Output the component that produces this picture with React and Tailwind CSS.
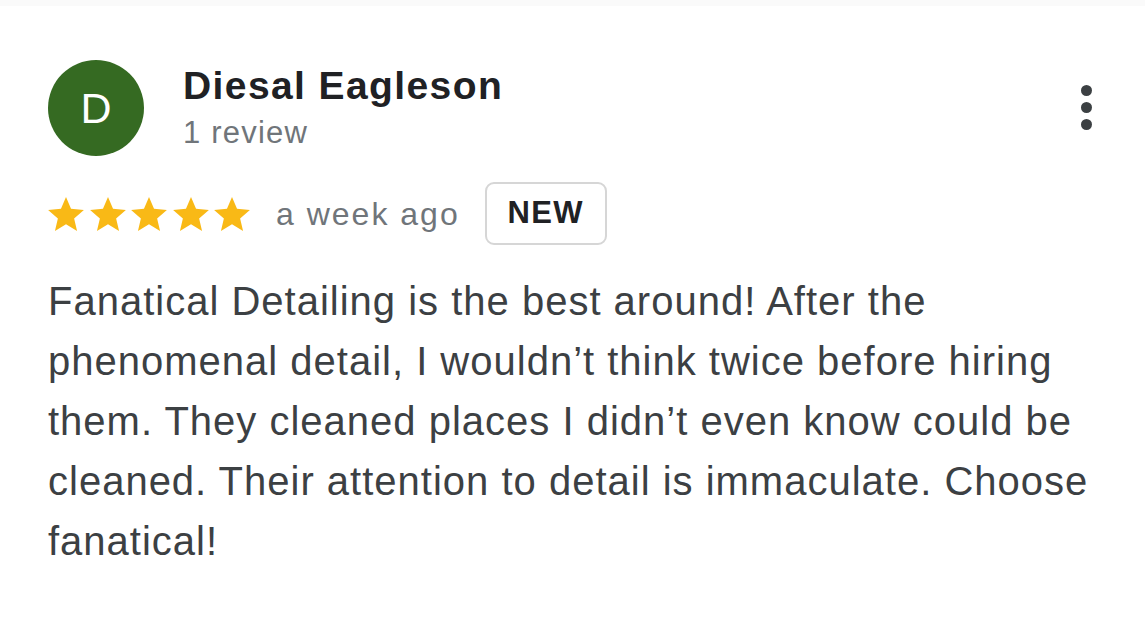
const Star = () => (
  <svg viewBox="2 2 20 19" width="36" height="34" className="block">
    <path
      d="M12 17.27L18.18 21l-1.64-7.03L22 9.24l-7.19-.61L12 2 9.19 8.63 2 9.24l5.46 4.73L5.82 21z"
      fill="#f9b916"
    />
  </svg>
);

const Review = () => {
  return (
    <div
      className="min-h-[624px] w-full bg-white"
      style={{ fontFamily: '"Liberation Sans", Arial, sans-serif' }}
    >
      {/* top strip */}
      <div className="h-[6px] bg-[#fafafa]" />

      <div className="pl-[48px] pr-[40px] pt-[54px]">
        {/* HEADER */}
        <div className="flex items-start">
          <div className="w-[96px] h-[96px] rounded-full bg-[#356a22] flex items-center justify-center shrink-0">
            <span className="text-white text-[43px] leading-none font-normal">D</span>
          </div>

          <div className="ml-[39px] mt-[4px] flex-1">
            <p className="text-[39px] leading-[44px] font-bold text-[#202124] tracking-[1.4px]">
              Diesal Eagleson
            </p>
            <p className="text-[31px] leading-[36px] text-[#70757a] mt-[7px] tracking-[1.2px]">
              1 review
            </p>
          </div>

          {/* MENU */}
          <div className="flex flex-col items-center gap-[6px] mt-[25px] mr-[13px]">
            <span className="w-[11px] h-[11px] rounded-full bg-[#3c4043]" />
            <span className="w-[11px] h-[11px] rounded-full bg-[#3c4043]" />
            <span className="w-[11px] h-[11px] rounded-full bg-[#3c4043]" />
          </div>
        </div>

        {/* RATING */}
        <div className="flex items-center mt-[26px]">
          <div className="flex items-center gap-[5.5px]">
            <Star />
            <Star />
            <Star />
            <Star />
            <Star />
          </div>
          <span className="ml-[26px] text-[32px] leading-[36px] text-[#70757a] tracking-[2px]">
            a week ago
          </span>
          <span className="ml-[25px] w-[122px] h-[63px] border-2 border-[#d6d6d6] rounded-[9px] flex items-center justify-center text-[31px] font-bold text-[#202124] tracking-[1.3px]">
            NEW
          </span>
        </div>

        {/* BODY */}
        <p className="mt-[26px] text-[40px] leading-[60px] text-[#3c4043] tracking-[1px] whitespace-nowrap">
          Fanatical Detailing is the best around! After the
          <br />
          phenomenal detail, I wouldn’t think twice before hiring
          <br />
          them. They cleaned places I didn’t even know could be
          <br />
          cleaned. Their attention to detail is immaculate. Choose
          <br />
          fanatical!
        </p>
      </div>
    </div>
  );
};

export default function App() {
  return <Review />;
}
